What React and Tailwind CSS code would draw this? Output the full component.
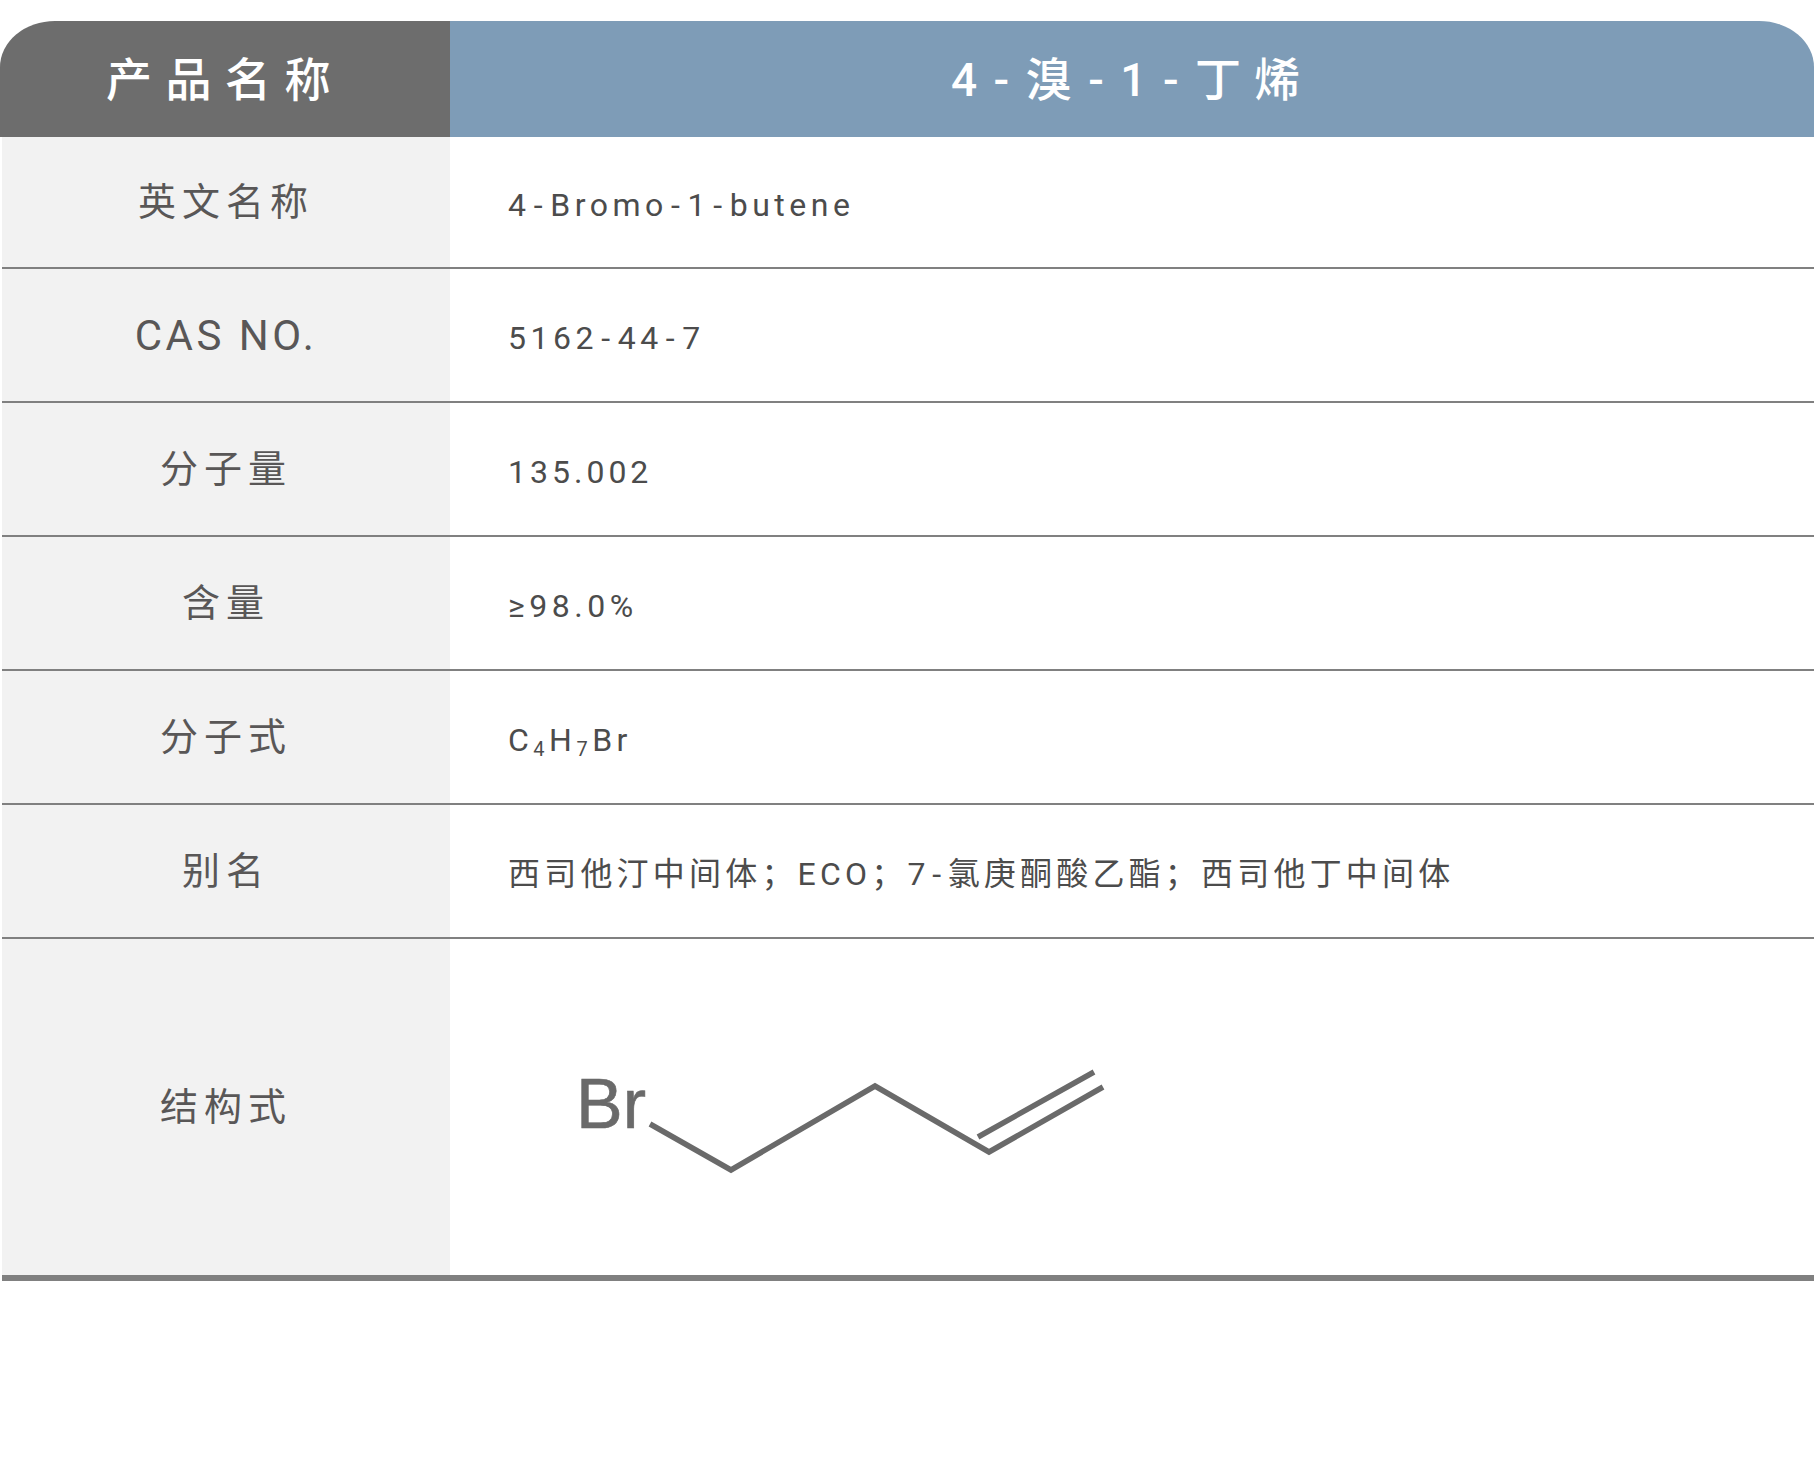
const font = { fontFamily: '"Roboto","Noto Sans CJK SC",sans-serif' };

function Row({ label, labelClass = "text-[38px] tracking-[6px]", valueClass = "tracking-[4.5px]", children }) {
  return (
    <div className="flex h-[134px] border-b-2 border-[#808080]">
      <div className={"flex w-[448px] shrink-0 items-center justify-center bg-[#f2f2f2] font-normal text-[#595757] " + labelClass}>
        {label}
      </div>
      <div className={"flex flex-1 items-center pl-[58px] pt-[6px] text-[32px] font-normal text-[#4c4c4c] " + valueClass}>
        <span>{children}</span>
      </div>
    </div>
  );
}

const Dash = () => <span className="mx-[3.2px]">-</span>;
const SmallDash = () => <span className="mx-[2.5px]">-</span>;
const HeadDash = () => <span className="mx-[3.5px]">-</span>;

function Molecule() {
  return (
    <svg width="560" height="160" viewBox="0 0 560 160" className="text-[#6a6a6a]">
      <text x="0" y="86" fontFamily="Liberation Sans" fontSize="70" fill="currentColor" stroke="currentColor" strokeWidth="0.6">Br</text>
      <path d="M74 82 L155 128 L299 44 L413 110 L527 45 M402 95 L518 30" fill="none" stroke="currentColor" strokeWidth="5.5" />
    </svg>
  );
}

export default function App() {
  return (
    <div className="min-h-[1462px] bg-white pt-[21px]" style={font}>
      <div className="flex h-[116px] font-medium text-white">
        <div className="flex w-[450px] shrink-0 items-center justify-center rounded-tl-[55px_46px] bg-[#6d6d6d] pt-[3px] text-[46px] tracking-[13.5px]">
          产品名称
        </div>
        <div className="flex flex-1 items-center justify-center rounded-tr-[55px_46px] bg-[#7e9cb7] pt-[3px] text-[46px] tracking-[13px]">
          <span>4<HeadDash />溴<HeadDash />1<HeadDash />丁烯</span>
        </div>
      </div>
      <div className="ml-[2px]">
        <div className="flex h-[132px] border-b-2 border-[#808080]">
          <div className="flex w-[448px] shrink-0 items-center justify-center bg-[#f2f2f2] text-[38px] font-normal tracking-[6px] text-[#595757]">
            英文名称
          </div>
          <div className="flex flex-1 items-center pl-[58px] pt-[6px] text-[32px] font-normal tracking-[4.5px] text-[#4c4c4c]">
            <span>4<Dash />Bromo<Dash />1<Dash />butene</span>
          </div>
        </div>
        <Row label="CAS NO." labelClass="text-[42px] tracking-[3.5px]">5162<Dash />44<Dash />7</Row>
        <Row label="分子量" valueClass="tracking-[4px]">135.002</Row>
        <Row label="含量">≥98.0%</Row>
        <Row label="分子式">
          C<sub className="text-[20px]">4</sub>H<sub className="text-[20px]">7</sub>Br
        </Row>
        <Row label="别名" valueClass="tracking-[4.2px]">西司他汀中间体；ECO；7<SmallDash />氯庚酮酸乙酯；西司他丁中间体</Row>
        <div className="flex h-[342px] border-b-[6px] border-[#808080]">
          <div className="flex w-[448px] shrink-0 items-center justify-center bg-[#f2f2f2] text-[38px] font-normal tracking-[6px] text-[#595757]">
            结构式
          </div>
          <div className="flex flex-1 items-center pl-[126px] pt-[30px]">
            <Molecule />
          </div>
        </div>
      </div>
    </div>
  );
}
